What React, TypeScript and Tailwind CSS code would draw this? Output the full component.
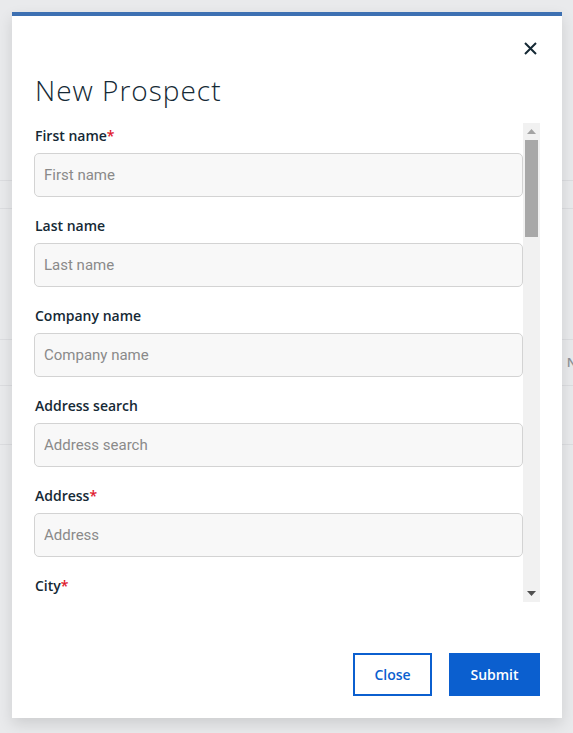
import React from 'react';

const fields = [
  { label: 'First name', required: true },
  { label: 'Last name', required: false },
  { label: 'Company name', required: false },
  { label: 'Address search', required: false },
  { label: 'Address', required: true },
  { label: 'City', required: true },
  { label: 'State', required: true },
];

const Field: React.FC<{ label: string; required: boolean }> = ({ label, required }) => (
  <div className="flex flex-col pb-[19px]">
    <label className="pl-px text-[14px] leading-[20px] font-semibold text-[#152935] mb-[7px]">
      {label}
      {required && <span className="text-[#e0182d]">*</span>}
    </label>
    <input
      className="h-[44px] w-full rounded-[5px] border border-[#d3d3d3] bg-[#f8f8f8] px-[9px] text-[15px] text-[#152935] placeholder:text-[#8a8a8a] focus:outline-none"
      style={{ fontFamily: 'Roboto, sans-serif' }}
      placeholder={label}
    />
  </div>
);

const Scrollbar: React.FC = () => (
  <div className="flex w-[17px] flex-col items-center bg-[#f1f1f1]">
    <div className="flex h-[17px] w-full items-center justify-center">
      <svg width="9" height="5" viewBox="0 0 9 5"><path d="M4.5 0 L9 5 L0 5 Z" fill="#a3a3a3" /></svg>
    </div>
    <div className="h-[97px] w-[13px] bg-[#a8a8a8]" />
    <div className="flex-1" />
    <div className="flex h-[17px] w-full items-center justify-center">
      <svg width="9" height="5" viewBox="0 0 9 5"><path d="M0 0 L9 0 L4.5 5 Z" fill="#505050" /></svg>
    </div>
  </div>
);

export default function App() {
  return (
    <div
      className="relative h-[733px] w-[573px] overflow-hidden bg-[#e9eaec]"
      style={{ fontFamily: '"Open Sans", sans-serif' }}
    >
      {/* dimmed page behind the dialog */}
      <div className="flex flex-col">
        <div className="h-[181px] border-b border-[#dcdde0]" />
        <div className="h-[28px] border-b border-[#dcdde0]" />
        <div className="h-[131px] border-b border-[#dcdde0]" />
        <div className="flex h-[46px] items-center justify-end border-b border-[#dcdde0]">
          <span className="mr-[-4px] text-[13px] font-semibold text-[#8e9297]">N</span>
        </div>
        <div className="h-[59px] border-b border-[#dcdde0]" />
      </div>

      <div className="absolute left-[12px] top-[12px] flex h-[706px] w-[550px] flex-col border-t-4 border-[#3d70b2] bg-white px-[22px] shadow-[0_6px_14px_rgba(0,0,0,0.12)]">
        <div className="flex justify-end pt-[22px]">
          <button className="flex h-[20px] w-[20px] items-center justify-center">
            <svg width="13" height="13" viewBox="0 0 13 13">
              <path d="M1 1 L12 12 M12 1 L1 12" stroke="#152935" strokeWidth="2" />
            </svg>
          </button>
        </div>
        <h2 className="mt-[14px] mb-[15px] h-[36px] pl-px text-[28px] font-light leading-[36px] tracking-[1px] text-[#152935]">
          New Prospect
        </h2>
        <div className="flex h-[479px]">
          <div className="flex-1 overflow-hidden pt-[3px]">
            {fields.map((f) => (
              <Field key={f.label} label={f.label} required={f.required} />
            ))}
          </div>
          <Scrollbar />
        </div>
        <div className="mt-[51px] flex justify-end gap-[17px]">
          <button className="h-[43px] w-[79px] border-2 border-[#0b5fcf] text-[14px] font-semibold text-[#0b5fcf]">
            Close
          </button>
          <button className="h-[43px] w-[91px] bg-[#0b5fcf] text-[14px] font-semibold text-white">
            Submit
          </button>
        </div>
      </div>
    </div>
  );
}
